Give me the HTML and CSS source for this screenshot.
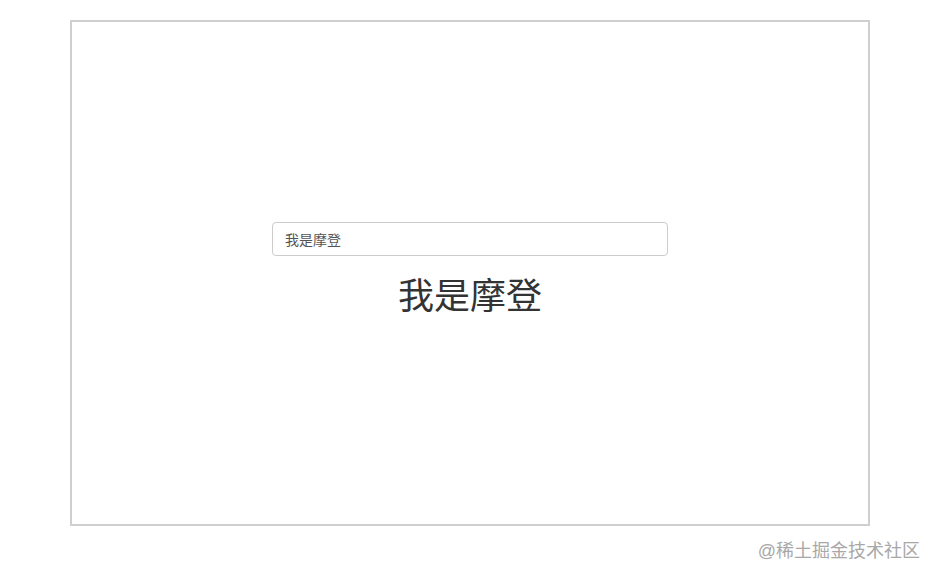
FILE: index.html
```html
<!DOCTYPE html>
<html lang="zh-CN">
<head>
  <meta charset="UTF-8">
  <meta name="viewport" content="width=device-width, initial-scale=1.0">
  <title>我是摩登</title>
  <link rel="stylesheet" href="styles.css">
</head>
<body>
  <div class="frame">
    <input class="text-input" type="text" value="我是摩登">
    <h1 class="echo">我是摩登</h1>
  </div>
  <div class="watermark">@稀土掘金技术社区</div>
</body>
</html>
```

FILE: styles.css
```css
body {
  margin: 0;
  padding-top: 20px;
  background-color: #fff;
  font-family: "Liberation Sans", "Noto Sans CJK SC", sans-serif;
  color: #333;
}
.frame {
  box-sizing: border-box;
  width: 800px;
  height: 506px;
  margin: 0 68px 0 70px;
  border: 2px solid #cfcfcf;
  display: flex;
  flex-direction: column;
  align-items: center;
  justify-content: center;
}
.text-input {
  box-sizing: border-box;
  width: 396px;
  height: 34px;
  padding: 0 12px;
  border: 1px solid #ccc;
  border-radius: 4px;
  font-family: "Liberation Sans", "Noto Sans CJK SC", sans-serif;
  font-size: 14px;
  color: #555;
  outline: none;
}
.echo {
  margin: 21px 0 7px;
  font-size: 36px;
  font-weight: 400;
  line-height: 40px;
  color: #333;
}
.watermark {
  margin-top: 13px;
  padding-right: 18px;
  text-align: right;
  font-size: 18px;
  line-height: 24px;
  color: #a8a8a8;
}
```
